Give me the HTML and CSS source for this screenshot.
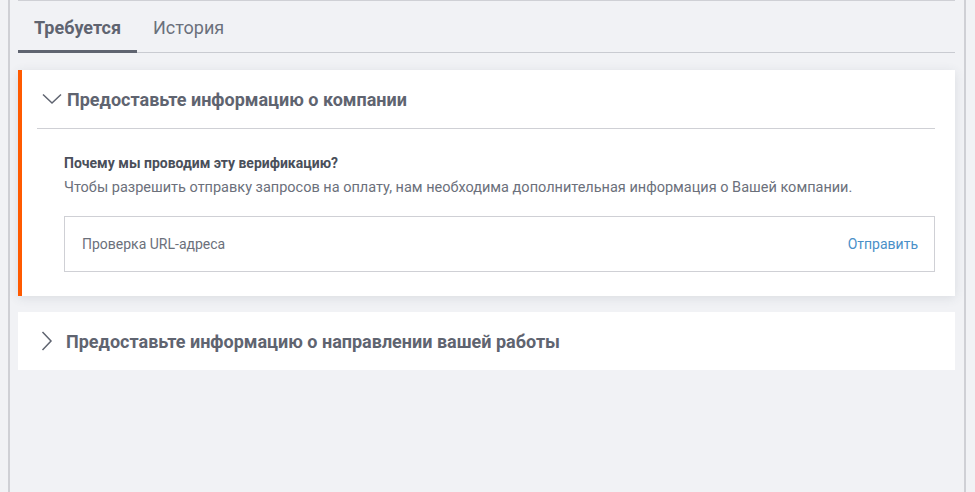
FILE: index.html
```html
<!DOCTYPE html>
<html lang="ru">
<head>
  <meta charset="UTF-8">
  <meta name="viewport" content="width=device-width, initial-scale=1.0">
  <link rel="stylesheet" href="styles.css">
</head>
<body>

<div class="panel">
  <div class="tabs">
    <div class="tab active">Требуется</div>
    <div class="tab">История</div>
  </div>

  <div class="card open">
    <div class="card-head">
      <svg class="chev" width="20" height="12" viewBox="0 0 20 12"><path d="M1 1.5 L10 10 L19 1.5" fill="none" stroke="#5f6470" stroke-width="1.5"/></svg>
      <span>Предоставьте информацию о компании</span>
    </div>
    <div class="card-body">
      <div class="why">Почему мы проводим эту верификацию?</div>
      <p class="why-text">Чтобы разрешить отправку запросов на оплату, нам необходима дополнительная информация о Вашей компании.</p>
      <div class="field">
        <span class="field-label">Проверка URL-адреса</span>
        <a class="field-action" href="#">Отправить</a>
      </div>
    </div>
  </div>

  <div class="card">
    <div class="card-head">
      <svg class="chev right" width="12" height="20" viewBox="0 0 12 20"><path d="M1.5 1 L10 10 L1.5 19" fill="none" stroke="#5f6470" stroke-width="1.5"/></svg>
      <span>Предоставьте информацию о направлении вашей работы</span>
    </div>
  </div>
</div>

</body>
</html>
```

FILE: styles.css
```css
html, body {
  margin: 0;
  height: 100%;
}
body {
  font-family: Roboto, 'Liberation Sans', sans-serif;
  color: #5f6470;
  background-color: #f1f2f5;
}
.panel {
  margin-left: 8px;
  width: 958px;
  min-height: 100%;
  box-sizing: border-box;
  border-left: 2px solid #cfd0d5;
  border-right: 2px solid #cfd0d5;
  padding: 0 9px 0 8px;
}
.panel::before {
  content: "";
  display: block;
  height: 1px;
  background: #cfd0d5;
}
.tabs {
  display: flex;
  border-bottom: 1px solid #c9cbd1;
  margin-top: 13px;
  margin-bottom: 17px;
}
.tab {
  font-size: 18px;
  padding: 3px 16px 12px 16px;
  color: #6b707b;
  margin-bottom: -1px;
  border-bottom: 3px solid transparent;
}
.tab.active {
  font-weight: bold;
  color: #5f6470;
  border-bottom-color: #5f6470;
}
.card {
  background: #ffffff;
  margin-bottom: 16px;
}
.card.open {
  border-left: 4px solid #ff5a00;
  box-shadow: 0 2px 10px rgba(60, 70, 90, 0.12);
}
.card-head {
  display: flex;
  align-items: center;
  gap: 5px;
  height: 58px;
  padding-left: 23px;
  font-size: 18px;
  font-weight: bold;
  color: #5f6470;
}
.card.open .card-head {
  margin: 0 20px 0 15px;
  padding-left: 5px;
  border-bottom: 1px solid #cfd0d5;
}
.chev.right {
  margin-right: 8px;
}
.card-body {
  padding: 26px 20px 24px 42px;
}
.why {
  font-size: 14px;
  font-weight: bold;
  color: #4a4f5a;
}
.why-text {
  font-size: 14.5px;
  margin: 8px 0 20px 0;
  color: #6b707b;
}
.field {
  display: flex;
  justify-content: space-between;
  align-items: center;
  height: 54px;
  border: 1px solid #cfd0d5;
  padding: 0 16px 0 17px;
  font-size: 14px;
}
.field-label {
  color: #6b707b;
}
.field-action {
  color: #4a90c8;
  text-decoration: none;
}
```
